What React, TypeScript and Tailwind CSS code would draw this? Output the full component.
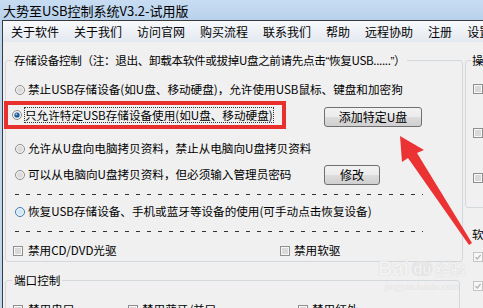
import React from 'react';

type RadioState = 'off' | 'on' | 'hover';

function Radio({ state = 'off' }: { state?: RadioState }) {
    const ring = state === 'hover' ? '#3d7bad' : '#8c8c8c';
    const fill = state === 'hover' ? '#cfe9f8' : '#dcdcdc';
    return (
        <svg width="10" height="10" viewBox="0 0 10 10" className="shrink-0">
            <circle cx="5" cy="5" r="4.5" fill="#f6f6f6" stroke={ring} strokeWidth="1" />
            <circle cx="5" cy="5" r="3" fill={fill} />
            {state === 'on' && (
                <>
                    <circle cx="5" cy="5" r="2.6" fill="#1b5c99" />
                    <circle cx="4.4" cy="4.3" r="1" fill="#8cc2f0" />
                </>
            )}
        </svg>
    );
}

function Check({ disabled, checked }: { disabled?: boolean; checked?: boolean }) {
    return (
        <svg width="10" height="10" viewBox="0 0 10 10" className="shrink-0">
            <rect x="0.5" y="0.5" width="9" height="9" fill="#f7f7f7" stroke={disabled ? '#c4c4c4' : '#8e8f8f'} />
            {!disabled && <rect x="2" y="2" width="6" height="6" fill="#d9d9d9" />}
            {checked && <path d="M2.5 5.2 L4.3 7 L7.6 2.8" fill="none" stroke="#b2b2b2" strokeWidth="1.3" />}
        </svg>
    );
}

function WinButton({ label, width }: { label: string; width: string }) {
    return (
        <button
            className={`h-[20px] ${width} shrink-0 rounded-[3px] border border-[#707070] bg-[linear-gradient(#f2f2f2,#ebebeb_50%,#dddddd_50%,#cfcfcf)] text-[12px] leading-none text-black`}
        >
            {label}
        </button>
    );
}

function Dashes() {
    return <div className="ml-[9px] h-px w-[408px] bg-[repeating-linear-gradient(90deg,#333_0_4px,transparent_4px_11px)]" />;
}

const menus = ['关于软件', '关于我们', '访问官网', '购买流程', '联系我们', '帮助', '远程协助', '注册', '设置'];

export default function App() {
    return (
        <div className="relative h-[308px] w-[483px] overflow-hidden bg-[#f0f0f0] font-['Noto_Sans_CJK_SC',sans-serif] text-[12px] text-black">
            {/* title bar */}
            <div className="flex h-[20px] items-center bg-linear-to-b from-[#c8ddf2] to-[#b8d1eb] pl-[3px] text-[13px] leading-none">
                大势至USB控制系统V3.2-试用版
            </div>

            <div className="flex">
                <div className="w-[2px] shrink-0 bg-[#bdd5ee]" />
                <div className="flex-1 border-l border-t border-[#3b3b3b]">
                    {/* menu */}
                    <div className="flex h-[21px] items-center gap-[15px] bg-linear-to-b from-[#f7f9fc] to-[#e4e9f0] pl-[8px] leading-none">
                        {menus.map((m) => (
                            <span key={m} className="whitespace-nowrap">{m}</span>
                        ))}
                    </div>

                    <div className="flex gap-[2px] pl-[2px] pt-[10px] text-[11.6px]">
                        {/* left column */}
                        <div className="flex w-[458px] shrink-0 flex-col">
                            <fieldset className="rounded-[3px] border border-[#d3d8dc]">
                                <legend className="ml-[6px] px-[2px] leading-[17px] tracking-[-0.35px] whitespace-nowrap">
                                    存储设备控制（注：退出、卸载本软件或拔掉U盘之前请先点击
                                    <span className="font-['Liberation_Sans',sans-serif]">“</span>恢复USB......
                                    <span className="font-['Liberation_Sans',sans-serif]">”</span>）
                                </legend>

                                <div className="mt-[11px] flex h-[20px] items-center gap-[3px] pl-[9px] whitespace-nowrap">
                                    <Radio />
                                    <span>禁止USB存储设备(如U盘、移动硬盘)，允许使用USB鼠标、键盘和加密狗</span>
                                </div>

                                <div className="mt-[1px] flex items-start">
                                    <div className="ml-[-2px] flex h-[28px] w-[282px] shrink-0 items-center gap-[3px] border-4 border-[#e8302f] pl-[4px] whitespace-nowrap">
                                        <Radio state="on" />
                                        <span className="leading-[14px] outline-1 outline-dotted outline-[#333]">
                                            只允许特定USB存储设备使用(如U盘、移动硬盘)
                                        </span>
                                    </div>
                                    <div className="ml-[38px] mt-[6px]">
                                        <WinButton label="添加特定U盘" width="w-[98px]" />
                                    </div>
                                </div>

                                <div className="mt-[10px] flex h-[20px] items-center gap-[3px] pl-[9px] whitespace-nowrap">
                                    <Radio />
                                    <span>允许从U盘向电脑拷贝资料，禁止从电脑向U盘拷贝资料</span>
                                </div>

                                <div className="mt-[6px] flex h-[20px] items-center pl-[9px] whitespace-nowrap">
                                    <div className="flex w-[309px] shrink-0 items-center gap-[3px]">
                                        <Radio />
                                        <span>可以从电脑向U盘拷贝资料，但必须输入管理员密码</span>
                                    </div>
                                    <WinButton label="修改" width="w-[56px]" />
                                </div>

                                <div className="mt-[9px]">
                                    <Dashes />
                                </div>

                                <div className="mt-[7px] flex h-[20px] items-center gap-[3px] pl-[9px] whitespace-nowrap">
                                    <Radio state="hover" />
                                    <span>恢复USB存储设备、手机或蓝牙等设备的使用(可手动点击恢复设备)</span>
                                </div>

                                <div className="mt-[9px]">
                                    <Dashes />
                                </div>

                                <div className="mt-[9px] flex h-[20px] items-center pl-[7px] whitespace-nowrap">
                                    <div className="flex w-[267px] shrink-0 items-center gap-[5px]">
                                        <Check />
                                        <span>禁用CD/DVD光驱</span>
                                    </div>
                                    <div className="flex items-center gap-[4px]">
                                        <Check />
                                        <span>禁用软驱</span>
                                    </div>
                                </div>
                            </fieldset>

                            <fieldset className="mt-[10px] h-[80px] w-[455px] rounded-[3px] border border-[#d3d8dc]">
                                <legend className="ml-[6px] px-[2px] leading-[17px]">端口控制</legend>
                                <div className="mt-[11px] flex h-[20px] items-center pl-[7px] whitespace-nowrap">
                                    <div className="flex w-[115px] items-center gap-[5px]">
                                        <Check />
                                        <span>禁用串口</span>
                                    </div>
                                    <div className="flex w-[170px] items-center gap-[4px]">
                                        <Check />
                                        <span>禁用蓝牙/并口</span>
                                    </div>
                                    <div className="flex items-center gap-[4px]">
                                        <Check />
                                        <span>禁用红外</span>
                                    </div>
                                </div>
                            </fieldset>
                        </div>

                        {/* right column */}
                        <div className="flex w-[120px] shrink-0 flex-col">
                            <fieldset className="h-[156px] rounded-[3px] border border-[#d3d8dc]">
                                <legend className="ml-[5px] px-[1px] leading-[17px] whitespace-nowrap">操作系统控制</legend>
                                <div className="mt-[10px] flex h-[20px] items-center gap-[4px] pl-[7px] whitespace-nowrap">
                                    <Check />
                                    <span>禁用注册表</span>
                                </div>
                                <div className="mt-[24px] flex h-[20px] items-center gap-[4px] pl-[7px] whitespace-nowrap">
                                    <Check />
                                    <span>禁用组策略</span>
                                </div>
                                <div className="mt-[25px] flex h-[20px] items-center gap-[4px] pl-[7px] whitespace-nowrap">
                                    <Check />
                                    <span>禁用任务管理器</span>
                                </div>
                            </fieldset>

                            <div className="mt-[18px] pl-[7px] leading-[17px] whitespace-nowrap">软件控制</div>
                            <div className="mt-[4px] flex h-[20px] items-center gap-[4px] pl-[8px] whitespace-nowrap text-[#a0a0a0]">
                                <Check disabled checked />
                                <span>禁止聊天</span>
                            </div>
                            <div className="mt-[9px] flex h-[20px] items-center gap-[4px] pl-[8px] whitespace-nowrap text-[#a0a0a0]">
                                <Check disabled checked />
                                <span>禁止游戏</span>
                            </div>
                        </div>
                    </div>
                </div>
            </div>

            {/* watermark */}
            <div className="pointer-events-none absolute left-[378px] top-[258px] flex flex-col items-center opacity-70">
                <div className="flex items-center gap-[2px] text-[20px] font-bold leading-none text-[#f4f4f4] [text-shadow:0_0_1px_#bdbdbd]">
                    <span className="font-['Liberation_Sans',sans-serif]">Bai</span>
                    <span className="rounded-full bg-[#e4e4e4] px-[2px] text-[15px] font-['Liberation_Sans',sans-serif]">du</span>
                    <span className="text-[15px]">经验</span>
                </div>
                <div className="mt-[4px] font-['Liberation_Serif',serif] text-[10px] leading-none text-[#e2e2e2]">jingyan.baidu.com</div>
            </div>

            {/* red arrow */}
            <svg className="pointer-events-none absolute left-0 top-0" width="483" height="308" viewBox="0 0 483 308">
                <polygon points="400,136 424,150 417,153 472,243 469,245 408,158 402,162" fill="#ec3333" />
            </svg>
        </div>
    );
}
